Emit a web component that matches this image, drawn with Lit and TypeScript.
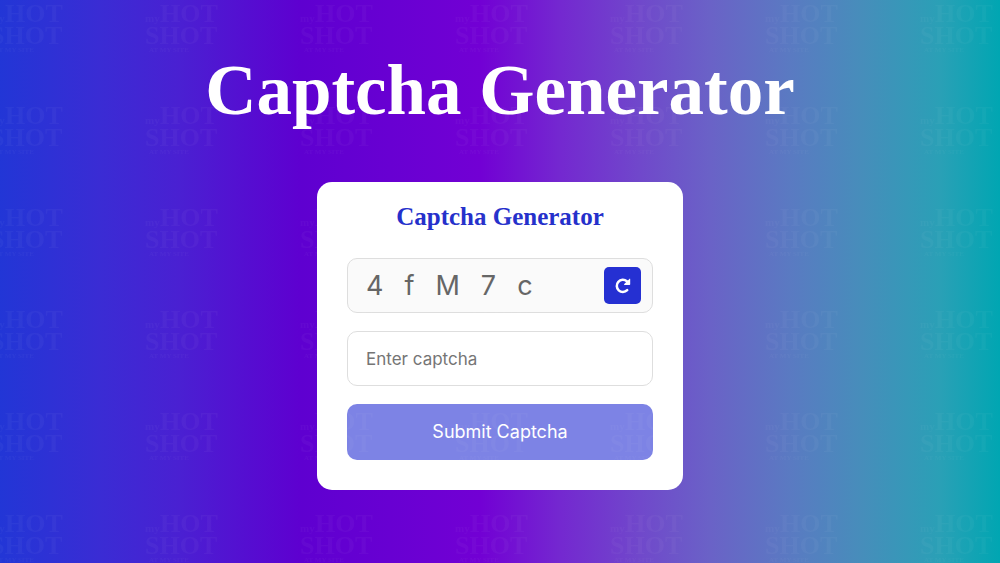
import { LitElement, html, css } from "lit";
import { customElement, state, query } from "lit/decorators.js";

const ALPHABET = "ABCDEFGHJKLMNPQRSTUVWXYZabcdefghjkmnpqrstuvwxyz23456789";

/** Faint repeating wordmark laid over the page. */
@customElement("watermark-layer")
class WatermarkLayer extends LitElement {
  static styles = css`
    :host {
      position: absolute;
      inset: 0;
      overflow: hidden;
      pointer-events: none;
    }
    svg {
      display: block;
      width: 100%;
      height: 100%;
    }
    text {
      fill: #ffffff;
      font-family: "Liberation Serif", serif;
      font-weight: 700;
    }
  `;

  render() {
    return html`
      <svg aria-hidden="true" opacity="0.03">
        <defs>
          <pattern id="mark" x="-11" y="0" width="155" height="102" patternUnits="userSpaceOnUse">
            <text x="1" y="22" font-size="11">my</text>
            <text x="16" y="22" font-size="26">HOT</text>
            <text x="1" y="44" font-size="26">SHOT</text>
            <text x="5" y="52" font-size="7">AT MY SITE</text>
          </pattern>
        </defs>
        <rect width="100%" height="100%" fill="url(#mark)"></rect>
      </svg>
    `;
  }
}

@customElement("captcha-card")
class CaptchaCard extends LitElement {
  @state() private code = "4fM7c";
  @state() private entry = "";
  @state() private message = "";
  @query("input") private field!: HTMLInputElement;

  static styles = css`
    :host {
      display: block;
      width: 100%;
      max-width: 366px;
    }
    * {
      box-sizing: border-box;
    }
    .card {
      display: flex;
      flex-direction: column;
      gap: 18px;
      padding: 18px 30px 30px;
      border-radius: 15px;
      background: #ffffff;
    }
    .title {
      margin: 0 0 6px;
      color: #2530cb;
      font: 700 25px/34px "Liberation Serif", serif;
      text-align: center;
    }
    .row {
      display: flex;
      align-items: center;
      justify-content: space-between;
      height: 55px;
      padding: 0 11px 0 18px;
      border: 1px solid #dedede;
      border-radius: 10px;
      background: #fafafa;
    }
    .code {
      display: flex;
      gap: 21px;
      color: #666666;
      font-size: 27px;
      font-weight: 400;
      user-select: none;
    }
    .refresh {
      display: grid;
      place-items: center;
      width: 37px;
      height: 37px;
      padding: 0;
      border: 0;
      border-radius: 5px;
      background: #2530d2;
      color: #ffffff;
      cursor: pointer;
    }
    .refresh svg {
      width: 18px;
      height: 18px;
    }
    .field {
      width: 100%;
      height: 55px;
      padding: 0 18px;
      border: 1px solid #dedede;
      border-radius: 10px;
      background: #ffffff;
      color: #333333;
      font: 400 17px/24px Inter, sans-serif;
      outline: none;
    }
    .field::placeholder {
      color: #757575;
      opacity: 1;
    }
    .field:focus {
      border-color: #2530d2;
    }
    .submit {
      width: 100%;
      height: 56px;
      border: 0;
      border-radius: 10px;
      background: #2530d2;
      color: #ffffff;
      font: 400 18px/24px Inter, sans-serif;
      cursor: pointer;
    }
    .submit.idle {
      background: #7d83e5;
      cursor: default;
    }
    .message {
      margin: 0;
      color: #2530cb;
      font-size: 14px;
      text-align: center;
    }
  `;

  private refresh() {
    this.code = Array.from(
      { length: 5 },
      () => ALPHABET[Math.floor(Math.random() * ALPHABET.length)]
    ).join("");
    this.entry = "";
    this.message = "";
    this.field.value = "";
  }

  private submit(event: Event) {
    event.preventDefault();
    if (!this.entry) return;
    this.message =
      this.entry === this.code ? "Captcha entered correctly" : "Captcha not matched. Please try again!";
  }

  render() {
    return html`
      <form class="card" @submit=${this.submit}>
        <h2 class="title">Captcha Generator</h2>
        <div class="row">
          <output class="code">${[...this.code].map((c) => html`<span>${c}</span>`)}</output>
          <button class="refresh" type="button" aria-label="New captcha" @click=${this.refresh}>
            <svg viewBox="0 0 18 18" fill="none" aria-hidden="true">
              <path d="M13.2 13.2A6.1 6.1 0 1 1 12.8 4.2L14.2 5.4" stroke="currentColor" stroke-width="2.5" stroke-linecap="round" />
              <path d="M15.4 1.9q.8-.8.8.4v4.9q0 .7-.7.7h-4.9q-1.2 0-.4-.8z" fill="currentColor" />
            </svg>
          </button>
        </div>
        <input
          class="field"
          type="text"
          placeholder="Enter captcha"
          aria-label="Enter captcha"
          autocomplete="off"
          @input=${(e: Event) => (this.entry = (e.target as HTMLInputElement).value)}
        />
        <button class="submit ${this.entry ? "" : "idle"}" type="submit">Submit Captcha</button>
        ${this.message ? html`<p class="message" role="status">${this.message}</p>` : ""}
      </form>
    `;
  }
}

@customElement("app-root")
class AppRoot extends LitElement {
  static styles = css`
    :host {
      position: relative;
      display: flex;
      flex-direction: column;
      align-items: center;
      gap: 48px;
      box-sizing: border-box;
      min-height: 100vh;
      padding: 46px 24px;
      background: linear-gradient(
        90deg,
        #2236d6 0%,
        #3a2cd4 10%,
        #4a20d2 18%,
        #5e00d0 30%,
        #7200d4 48%,
        #7428d0 56%,
        #7048cb 64%,
        #6a62c7 71%,
        #5a7ac2 79%,
        #478dbb 86%,
        #2aa0b6 94%,
        #00a6b2 100%
      );
      font-family: Inter, sans-serif;
    }
    .heading {
      margin: 0;
      color: #ffffff;
      font: 700 71px/88px "Liberation Serif", serif;
      text-align: center;
    }
  `;

  render() {
    return html`
      <h1 class="heading">Captcha Generator</h1>
      <captcha-card></captcha-card>
      <watermark-layer></watermark-layer>
    `;
  }
}
